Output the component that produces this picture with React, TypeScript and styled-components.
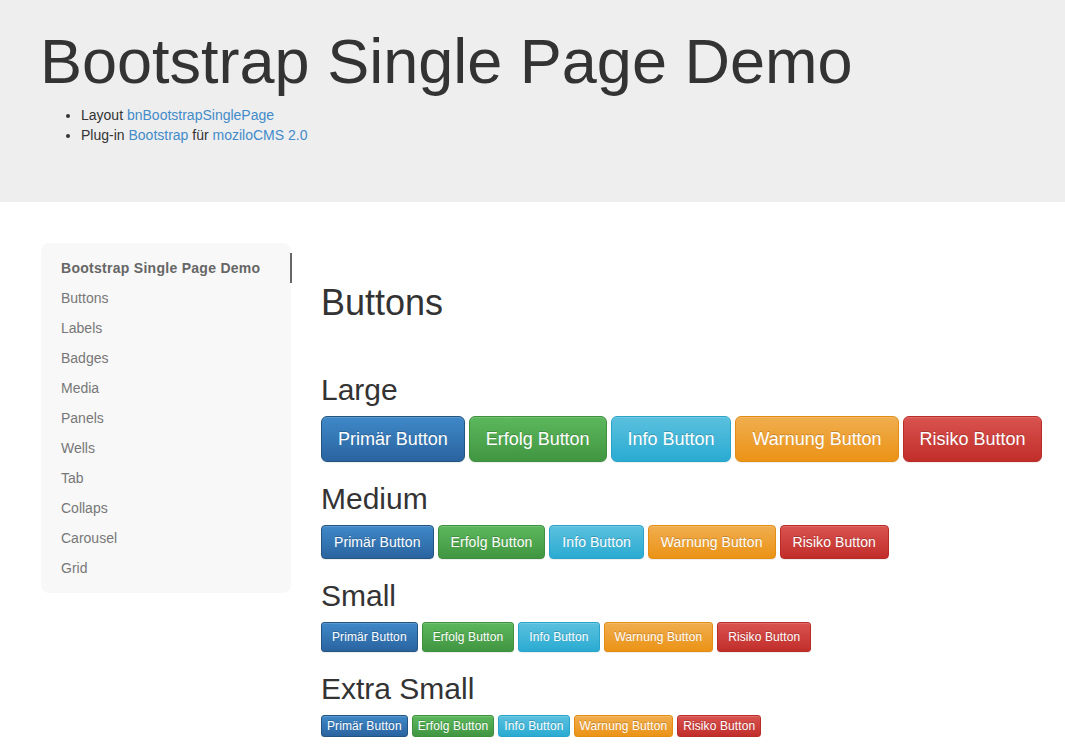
import React from "react";
import styled, { createGlobalStyle, css } from "styled-components";

const GlobalStyle = createGlobalStyle`
  * { box-sizing: border-box; }
  html, body { margin: 0; padding: 0; background: #fff; }
  body {
    font-family: "Liberation Sans", Arial, Helvetica, sans-serif;
    font-size: 14px;
    line-height: 1.42857;
    color: #333;
  }
`;

const Jumbotron = styled.header`
  background: #eeeeee;
  height: 202px;
  padding: 27px 40px 0 40px;
`;

const JumboTitle = styled.h1`
  margin: 0;
  font-size: 63px;
  font-weight: 400;
  line-height: 1.1;
  color: #333;
`;

const InfoList = styled.ul`
  margin: 9px 0 0 0;
  padding-left: 41px;
  list-style: disc;
  font-size: 14px;
  line-height: 20px;
`;

const Link = styled.a`
  color: #428bca;
  text-decoration: none;
`;

const Main = styled.main`
  display: grid;
  grid-template-columns: 250px 1fr;
  column-gap: 30px;
  padding: 41px 20px 0 41px;
`;

const Sidebar = styled.nav`
  align-self: start;
  background: #f8f8f8;
  border-radius: 8px;
  padding: 10px 0;
`;

const NavItem = styled.a<{ $active?: boolean }>`
  display: block;
  height: 30px;
  line-height: 30px;
  padding: 0 20px;
  font-size: 14px;
  color: #777;
  text-decoration: none;
  border-right: 2px solid transparent;
  margin-right: -1px;
  ${(p) =>
    p.$active &&
    css`
      font-weight: 700;
      color: #666;
      letter-spacing: 0.28px;
      border-right-color: #666;
    `}
`;

const Content = styled.section`
  min-width: 0;
`;

const PageTitle = styled.h1`
  margin: 40px 0 50px;
  font-size: 36px;
  font-weight: 400;
  line-height: 1.1;
  color: #333;
`;

const SizeTitle = styled.h2`
  margin: 20px 0 10px;
  font-size: 30px;
  font-weight: 400;
  line-height: 1.1;
  color: #333;
`;

const ButtonRow = styled.div`
  display: flex;
  flex-wrap: wrap;
  gap: 4px;
`;

type Variant = "primary" | "success" | "info" | "warning" | "danger";
type Size = "lg" | "md" | "sm" | "xs";

const variants: Record<Variant, { from: string; to: string; border: string }> = {
  primary: { from: "#3f88c8", to: "#2a64a0", border: "#245580" },
  success: { from: "#5cb85c", to: "#419641", border: "#3e8f3e" },
  info: { from: "#5bc0de", to: "#2aabd2", border: "#28a4c9" },
  warning: { from: "#f0ad4e", to: "#eb9316", border: "#e38d13" },
  danger: { from: "#d9534f", to: "#c12e2a", border: "#b92c28" },
};

const sizes: Record<
  Size,
  { padding: string; font: string; lh: string; radius: string; ls: string }
> = {
  lg: { padding: "10px 16px", font: "18px", lh: "24px", radius: "6px", ls: "-0.02px" },
  md: { padding: "6px 12px", font: "14px", lh: "20px", radius: "4px", ls: "0.07px" },
  sm: { padding: "5px 10px", font: "12px", lh: "18px", radius: "3px", ls: "0.1px" },
  xs: { padding: "1px 5px", font: "12px", lh: "18px", radius: "3px", ls: "0.1px" },
};

const Btn = styled.button<{ $variant: Variant; $size: Size }>`
  display: inline-block;
  margin: 0;
  font-family: inherit;
  font-weight: 400;
  color: #fff;
  cursor: pointer;
  white-space: nowrap;
  text-shadow: 0 -1px 0 rgba(0, 0, 0, 0.2);
  box-shadow: inset 0 1px 0 rgba(255, 255, 255, 0.15), 0 1px 1px rgba(0, 0, 0, 0.075);
  border: 1px solid ${(p) => variants[p.$variant].border};
  background: linear-gradient(
    to bottom,
    ${(p) => variants[p.$variant].from} 0%,
    ${(p) => variants[p.$variant].to} 100%
  );
  padding: ${(p) => sizes[p.$size].padding};
  font-size: ${(p) => sizes[p.$size].font};
  line-height: ${(p) => sizes[p.$size].lh};
  border-radius: ${(p) => sizes[p.$size].radius};
  letter-spacing: ${(p) => sizes[p.$size].ls};
`;

const buttons: { variant: Variant; label: string }[] = [
  { variant: "primary", label: "Primär Button" },
  { variant: "success", label: "Erfolg Button" },
  { variant: "info", label: "Info Button" },
  { variant: "warning", label: "Warnung Button" },
  { variant: "danger", label: "Risiko Button" },
];

const groups: { size: Size; title: string }[] = [
  { size: "lg", title: "Large" },
  { size: "md", title: "Medium" },
  { size: "sm", title: "Small" },
  { size: "xs", title: "Extra Small" },
];

const navItems = [
  "Bootstrap Single Page Demo",
  "Buttons",
  "Labels",
  "Badges",
  "Media",
  "Panels",
  "Wells",
  "Tab",
  "Collaps",
  "Carousel",
  "Grid",
];

export default function App() {
  return (
    <>
      <GlobalStyle />
      <Jumbotron>
        <JumboTitle>Bootstrap Single Page Demo</JumboTitle>
        <InfoList>
          <li>
            Layout <Link href="#">bnBootstrapSinglePage</Link>
          </li>
          <li>
            Plug-in <Link href="#">Bootstrap</Link> für <Link href="#">moziloCMS 2.0</Link>
          </li>
        </InfoList>
      </Jumbotron>
      <Main>
        <Sidebar>
          {navItems.map((item, i) => (
            <NavItem key={item} href="#" $active={i === 0}>
              {item}
            </NavItem>
          ))}
        </Sidebar>
        <Content>
          <PageTitle>Buttons</PageTitle>
          {groups.map((g) => (
            <div key={g.size}>
              <SizeTitle>{g.title}</SizeTitle>
              <ButtonRow>
                {buttons.map((b) => (
                  <Btn key={b.variant} type="button" $variant={b.variant} $size={g.size}>
                    {b.label}
                  </Btn>
                ))}
              </ButtonRow>
            </div>
          ))}
        </Content>
      </Main>
    </>
  );
}
